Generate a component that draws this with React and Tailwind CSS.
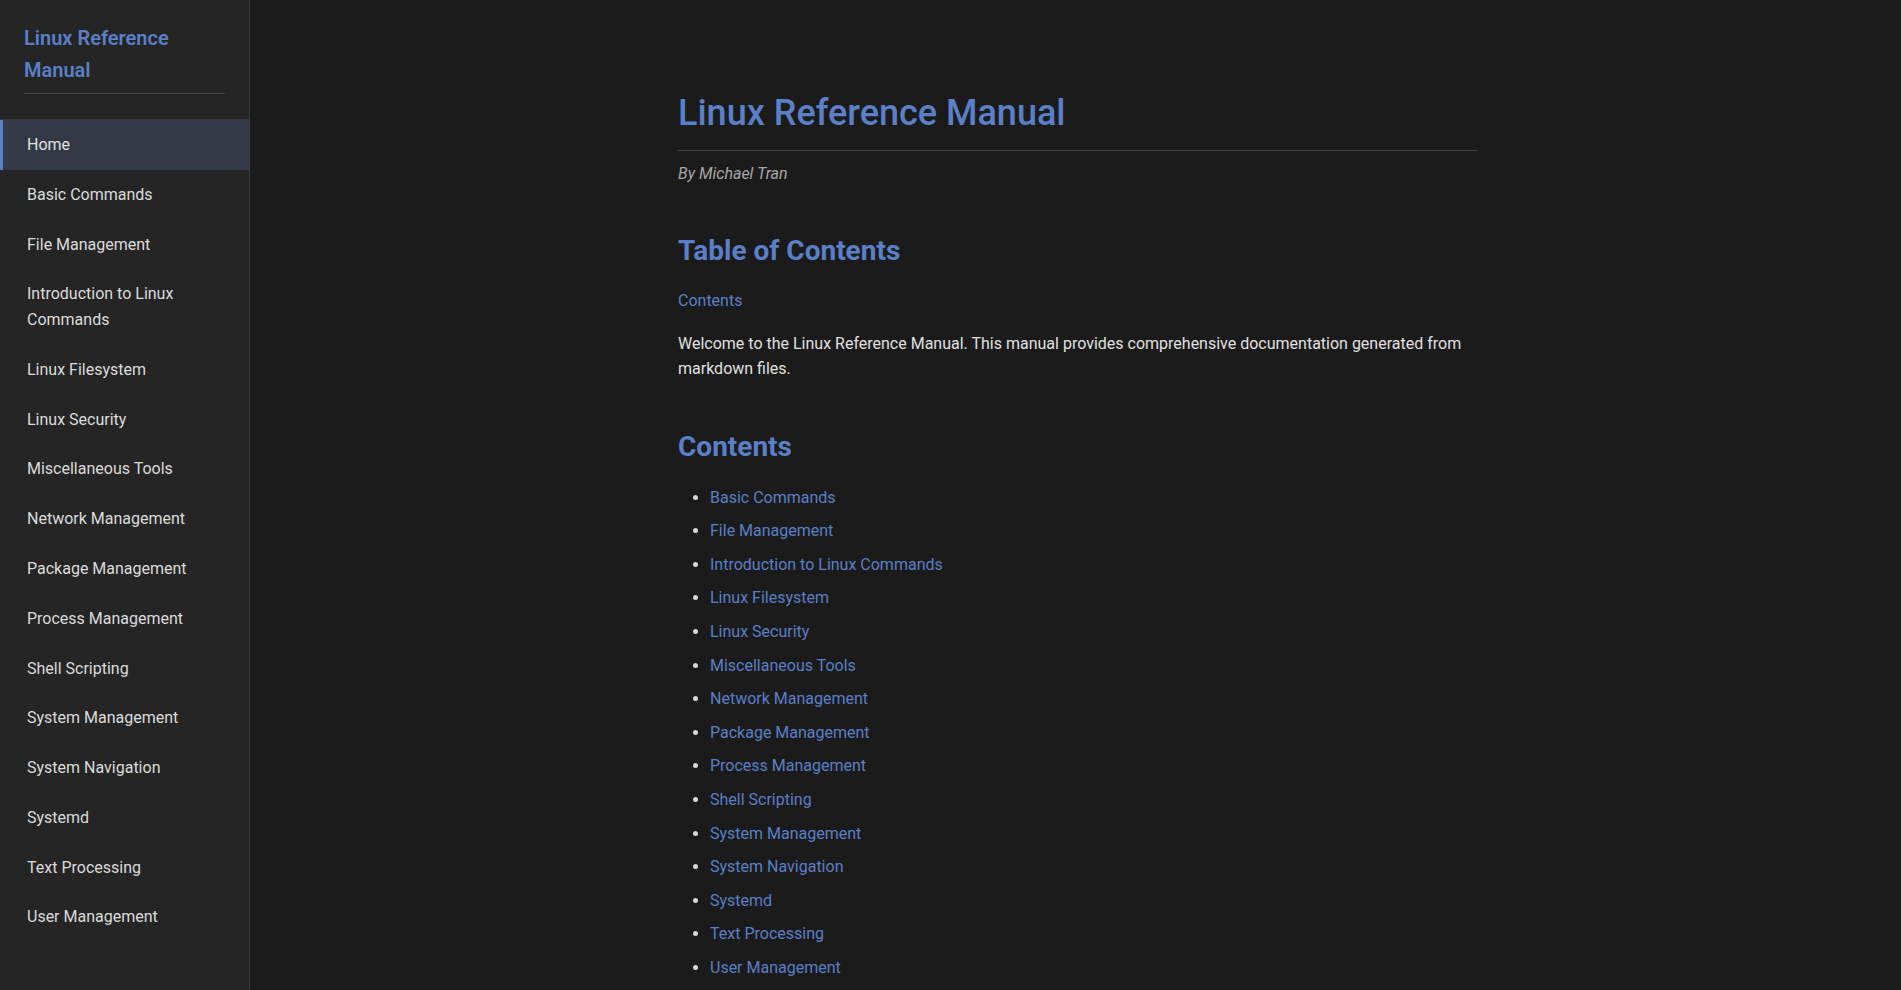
const pages = [
  "Basic Commands",
  "File Management",
  "Introduction to Linux Commands",
  "Linux Filesystem",
  "Linux Security",
  "Miscellaneous Tools",
  "Network Management",
  "Package Management",
  "Process Management",
  "Shell Scripting",
  "System Management",
  "System Navigation",
  "Systemd",
  "Text Processing",
  "User Management",
];

function Sidebar() {
  return (
    <aside className="w-[250px] shrink-0 h-screen bg-[#252525] border-r border-[#3a3a3a] overflow-y-auto">
      <div className="px-6 pt-[22px]">
        <h2 className="text-[20px] leading-[32px] font-semibold text-[#5b80c8] pb-[7px] border-b border-[#444444]">
          Linux Reference Manual
        </h2>
      </div>
      <nav className="mt-[25px] border-t border-[#3a3a3a]">
        <a className="block pl-6 pr-4 py-[12.1px] text-[16px] leading-[25.6px] text-[#e2e2e2] bg-[#333945] border-l-[3px] border-[#5b80c8]">
          Home
        </a>
        {pages.map((p) => (
          <a key={p} className="block pl-6 pr-6 py-[12.1px] text-[16px] leading-[25.6px] text-[#dcdcdc] border-l-[3px] border-transparent">
            {p}
          </a>
        ))}
      </nav>
    </aside>
  );
}

export default function App() {
  return (
    <div className="flex h-screen overflow-hidden bg-[#1b1b1b] font-['Roboto',sans-serif]">
      <Sidebar />
      <main className="flex-1 overflow-y-auto pl-[45px] pr-[40px]">
        <div className="max-w-[800px] mx-auto pt-[92px] pb-10 text-[16px] leading-[25.6px] text-[#e0e0e0]">
          <h1 className="text-[36px] leading-[43px] font-medium text-[#5b80c8] pb-[15px] border-b border-[#444444]">
            Linux Reference Manual
          </h1>
          <p className="mt-[10px] italic text-[16px] text-[#a8a8a8]">By Michael Tran</p>

          <h2 className="mt-[47px] text-[28px] leading-[33.6px] font-bold text-[#5b80c8]">Table of Contents</h2>
          <a className="block mt-[21px] text-[#5b80c8]">Contents</a>
          <p className="mt-[17px]">
            Welcome to the Linux Reference Manual. This manual provides comprehensive documentation generated from markdown files.
          </p>

          <h2 className="mt-[48px] text-[28px] leading-[33.6px] font-bold text-[#5b80c8]">Contents</h2>
          <ul className="mt-[21px] list-disc pl-8 marker:text-[#d8d8d8]">
            {pages.map((p) => (
              <li key={p} className="mb-2">
                <a className="text-[#5b80c8]">{p}</a>
              </li>
            ))}
          </ul>
        </div>
      </main>
    </div>
  );
}
